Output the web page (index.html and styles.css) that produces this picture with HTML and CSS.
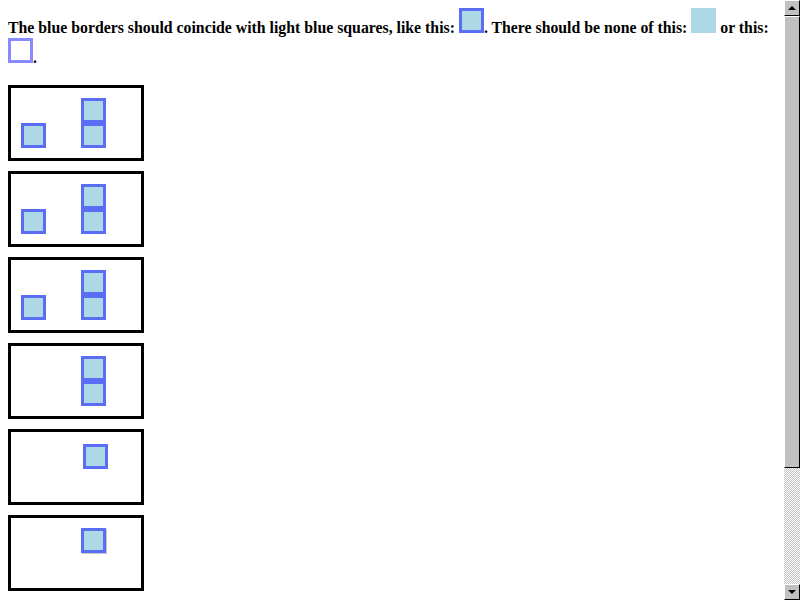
FILE: index.html
```html
<!DOCTYPE html>
<html>
<head>
<meta charset="utf-8">
<link rel="stylesheet" href="styles.css">
</head>
<body>
<p class="intro">The blue borders should coincide with light blue squares, like this: <span class="sq good"></span>. There should be none of this: <span class="sq fill"></span> or this: <span class="sq line"></span>.</p>

<div class="box">
  <span class="sq good"></span>
  <span class="stack"><span class="sq good"></span><span class="sq good"></span></span>
</div>
<div class="box">
  <span class="sq good"></span>
  <span class="stack"><span class="sq good"></span><span class="sq good"></span></span>
</div>
<div class="box">
  <span class="sq good"></span>
  <span class="stack"><span class="sq good"></span><span class="sq good"></span></span>
</div>
<div class="box">
  <span class="stack solo"><span class="sq good"></span><span class="sq good"></span></span>
</div>
<div class="box top shift">
  <span class="sq good"></span>
</div>
<div class="box top">
  <span class="sq good shadow"></span>
</div>

<div class="scrollbar">
  <div class="sb-btn"><span class="arrow up"></span></div>
  <div class="sb-thumb"></div>
  <div class="sb-track"></div>
  <div class="sb-btn"><span class="arrow down"></span></div>
</div>
</body>
</html>
```

FILE: styles.css
```css
html {
  overflow: hidden;
  background: #fff;
}
body {
  margin: 8px 18px 8px 8px;
  font-family: "Liberation Serif", "Times New Roman", serif;
  font-size: 15.8px;
  font-weight: bold;
  color: #000;
}
.intro {
  margin: 0 0 17px;
  line-height: 1.2;
}
.sq {
  display: inline-block;
  width: 25px;
  height: 25px;
  box-sizing: border-box;
}
.good {
  background: #add8e6;
  border: 3px solid #5b6cf5;
}
.fill {
  background: #add8e6;
}
.line {
  border: 3px solid #8a8aff;
}
.box {
  box-sizing: border-box;
  width: 136px;
  height: 76px;
  border: 3px solid #000;
  margin-bottom: 10px;
  padding: 10px;
  display: flex;
  align-items: flex-end;
  gap: 35px;
}
.box.top {
  align-items: flex-start;
  padding-left: 70px;
}
.box.shift {
  padding-left: 72px;
  padding-top: 12px;
}
.stack {
  display: flex;
  flex-direction: column;
}
.stack.solo {
  margin-left: 60px;
}
.box .sq {
  display: block;
}
.shadow {
  box-shadow: 1px 1px 0 #c8c8c8;
}

.scrollbar {
  position: fixed;
  top: 0;
  right: 0;
  width: 16px;
  height: 600px;
  display: flex;
  flex-direction: column;
  background: #c0c0c0;
}
.sb-btn {
  box-sizing: border-box;
  height: 16px;
  border-top: 1px solid #fff;
  border-left: 1px solid #fff;
  border-right: 1px solid #000;
  border-bottom: 1px solid #000;
  background: #c0c0c0;
  display: flex;
  align-items: center;
  justify-content: center;
}
.arrow {
  width: 0;
  height: 0;
  border-left: 4px solid transparent;
  border-right: 4px solid transparent;
}
.arrow.up {
  border-bottom: 4px solid #000;
}
.arrow.down {
  border-top: 4px solid #000;
}
.sb-thumb {
  box-sizing: border-box;
  height: 452px;
  border-top: 1px solid #fff;
  border-left: 1px solid #fff;
  border-right: 1px solid #000;
  border-bottom: 1px solid #000;
  background: #c0c0c0;
}
.sb-track {
  flex: 1;
  background: repeating-conic-gradient(#c0c0c0 0 25%, #fff 0 50%) 0 0 / 2px 2px;
}
```
